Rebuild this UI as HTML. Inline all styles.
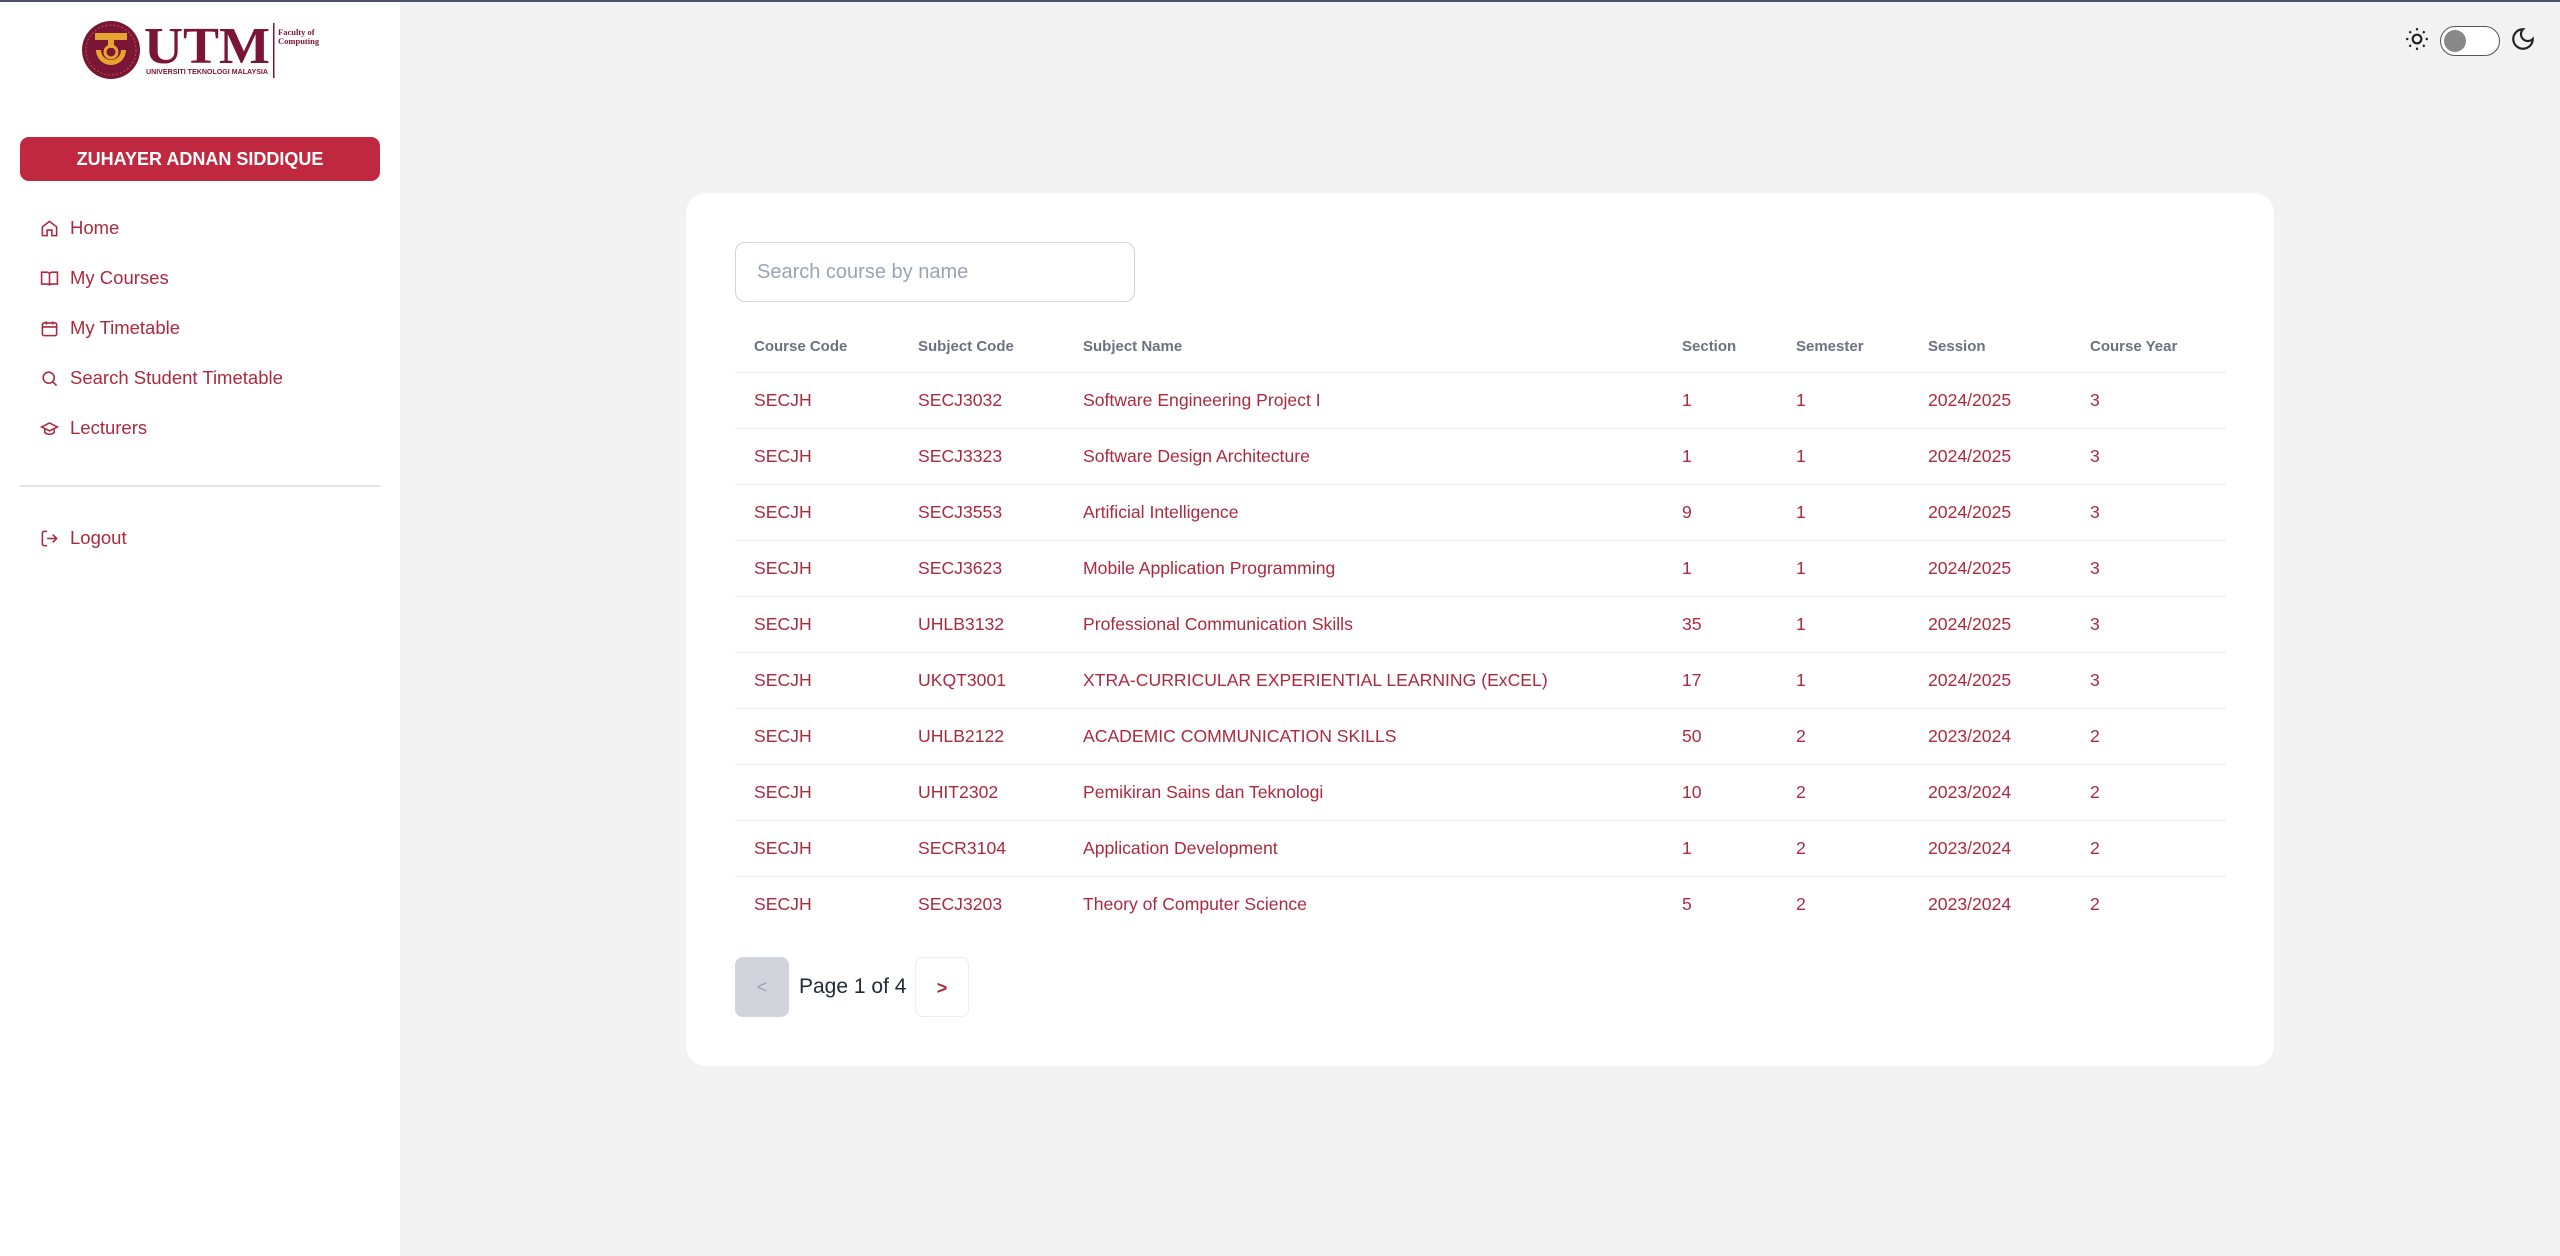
<!DOCTYPE html>
<html><head><meta charset="utf-8"><style>
*{box-sizing:border-box;margin:0;padding:0}
body{width:2560px;height:1256px;background:#f2f2f2;font-family:"Liberation Sans",sans-serif;position:relative;overflow:hidden}
.top{position:absolute;left:0;top:0;width:2560px;height:2px;background:#4b5368;z-index:5}
.side{position:absolute;left:0;top:0;width:400px;height:1256px;background:#fff}
.name{position:absolute;left:20px;top:137px;width:360px;height:44px;background:#c0283f;border-radius:9px;color:#fff;font-weight:bold;font-size:18px;text-align:center;line-height:44px}
.nav{position:absolute;left:40px;color:#ab2a3f;font-size:18.5px;display:flex;align-items:center}
.nav svg{width:19px;height:19px;margin-right:11px;stroke:#ab2a3f;fill:none;stroke-width:2}
.div{position:absolute;left:20px;top:485px;width:360px;height:2px;background:#e3e3e3}
.card{position:absolute;left:686px;top:193px;width:1588px;height:873px;background:#fff;border-radius:20px}
.search{position:absolute;left:49px;top:49px;width:400px;height:60px;border:1px solid #d4d4d8;border-radius:10px;font-size:20px;color:#9ca3af;padding-left:21px;line-height:58px}
.th,.td{position:absolute;white-space:nowrap}
.th{font-size:15px;color:#6b7280;font-weight:bold}
.td{font-size:17.6px;color:#ab2a3f}
.line{position:absolute;left:49px;width:1491px;height:1px;background:#ebebeb}
.pb{position:absolute;top:764px;width:54px;height:60px;border-radius:8px;text-align:center;line-height:60px;font-size:18px}
</style></head><body>
<div class="top"></div>
<div class="side">
<svg style="position:absolute;left:70px;top:18px" width="270" height="66" viewBox="70 18 270 66">
<circle cx="111" cy="50" r="29" fill="#7a1535"/>
<circle cx="111" cy="50" r="25" fill="none" stroke="#b8563a" stroke-width="1" stroke-dasharray="2 2"/>
<rect x="95" y="33" width="32" height="7" fill="#e6a531"/>
<rect x="108" y="38" width="6" height="10" fill="#e6a531"/>
<path d="M96 50 A15 15 0 0 0 126 50 L121 50 A10 10 0 0 1 101 50Z" fill="#e6a531"/>
<circle cx="111" cy="52" r="6" fill="none" stroke="#e6a531" stroke-width="3"/>
<text x="144" y="63" font-family="Liberation Serif" font-weight="bold" font-size="52" fill="#7a1535" textLength="126" lengthAdjust="spacingAndGlyphs">UTM</text>
<text x="146" y="74" font-family="Liberation Sans" font-weight="bold" font-size="7" fill="#7a1535" textLength="122" lengthAdjust="spacingAndGlyphs">UNIVERSITI TEKNOLOGI MALAYSIA</text>
<rect x="273" y="23" width="1.5" height="55" fill="#7a1535"/>
<text x="278" y="35" font-family="Liberation Serif" font-weight="bold" font-size="8.5" fill="#7a1535">Faculty of</text>
<text x="278" y="44" font-family="Liberation Serif" font-weight="bold" font-size="8.5" fill="#7a1535">Computing</text>
</svg>
<div class="name">ZUHAYER ADNAN SIDDIQUE</div>
<div class="nav" style="top:217px"><svg viewBox="0 0 24 24"><path d="M3 10l9-7 9 7v11h-6v-7H9v7H3z"/></svg>Home</div>
<div class="nav" style="top:267px"><svg viewBox="0 0 24 24"><path d="M2 4h7a3 3 0 0 1 3 3v14a2 2 0 0 0-2-2H2zM22 4h-7a3 3 0 0 0-3 3v14a2 2 0 0 1 2-2h8z"/></svg>My Courses</div>
<div class="nav" style="top:317px"><svg viewBox="0 0 24 24"><rect x="3" y="5" width="18" height="16" rx="2"/><path d="M3 10h18M8 3v4M16 3v4"/></svg>My Timetable</div>
<div class="nav" style="top:367px"><svg viewBox="0 0 24 24"><circle cx="11" cy="11" r="7"/><path d="M21 21l-5-5"/></svg>Search Student Timetable</div>
<div class="nav" style="top:417px"><svg viewBox="0 0 24 24"><path d="M22 10L12 5 2 10l10 5zM6 12v5c3 3 9 3 12 0v-5"/></svg>Lecturers</div>
<div class="div"></div>
<div class="nav" style="top:527px"><svg viewBox="0 0 24 24"><path d="M9 21H5a2 2 0 0 1-2-2V5a2 2 0 0 1 2-2h4M16 17l5-5-5-5M21 12H9"/></svg>Logout</div>
</div>
<svg style="position:absolute;left:2404px;top:26px" width="26" height="26" viewBox="0 0 24 24" fill="none" stroke="#222" stroke-width="2"><circle cx="12" cy="12" r="4"/><path d="M12 2v2M12 20v2M2 12h2M20 12h2M5 5l1.4 1.4M17.6 17.6L19 19M5 19l1.4-1.4M17.6 6.4L19 5"/></svg>
<div style="position:absolute;left:2440px;top:26px;width:60px;height:30px;border:1.5px solid #555;border-radius:15px;background:#fff"><div style="position:absolute;left:3px;top:3px;width:22px;height:22px;border-radius:50%;background:#888"></div></div>
<svg style="position:absolute;left:2510px;top:26px" width="26" height="26" viewBox="0 0 24 24" fill="none" stroke="#222" stroke-width="2"><path d="M12 3a6 6 0 0 0 9 9 9 9 0 1 1-9-9z"/></svg>
<div class="card">
<div class="search">Search course by name</div>
<div class="th" style="left:68px;top:145px">Course Code</div>
<div class="th" style="left:232px;top:145px">Subject Code</div>
<div class="th" style="left:397px;top:145px">Subject Name</div>
<div class="th" style="left:996px;top:145px">Section</div>
<div class="th" style="left:1110px;top:145px">Semester</div>
<div class="th" style="left:1242px;top:145px">Session</div>
<div class="th" style="left:1404px;top:145px">Course Year</div>
<div class="line" style="top:179px"></div>
<div id="rows"></div>
<div class="pb" style="left:49px;background:#d1d5db;color:#9ca3af">&lt;</div>
<div style="position:absolute;left:113px;top:764px;line-height:60px;font-size:21px;color:#1f2937">Page 1 of 4</div>
<div class="pb" style="left:229px;border:1px solid #eee;color:#ab2a3f;font-weight:bold">&gt;</div>
</div>
<script>
var d=[["SECJ3032","Software Engineering Project I","1","1","2024/2025","3"],["SECJ3323","Software Design Architecture","1","1","2024/2025","3"],["SECJ3553","Artificial Intelligence","9","1","2024/2025","3"],["SECJ3623","Mobile Application Programming","1","1","2024/2025","3"],["UHLB3132","Professional Communication Skills","35","1","2024/2025","3"],["UKQT3001","XTRA-CURRICULAR EXPERIENTIAL LEARNING (ExCEL)","17","1","2024/2025","3"],["UHLB2122","ACADEMIC COMMUNICATION SKILLS","50","2","2023/2024","2"],["UHIT2302","Pemikiran Sains dan Teknologi","10","2","2023/2024","2"],["SECR3104","Application Development","1","2","2023/2024","2"],["SECJ3203","Theory of Computer Science","5","2","2023/2024","2"]];
var xs=[68,232,397,996,1110,1242,1404],h="";
d.forEach(function(r,i){var t=197+i*56;var v=["SECJH"].concat(r);v.forEach(function(s,j){h+='<div class="td" style="left:'+xs[j]+'px;top:'+t+'px">'+s+'</div>'});if(i<9)h+='<div class="line" style="top:'+(235+i*56)+'px"></div>'});
document.getElementById("rows").innerHTML=h;
</script>
</body></html>
